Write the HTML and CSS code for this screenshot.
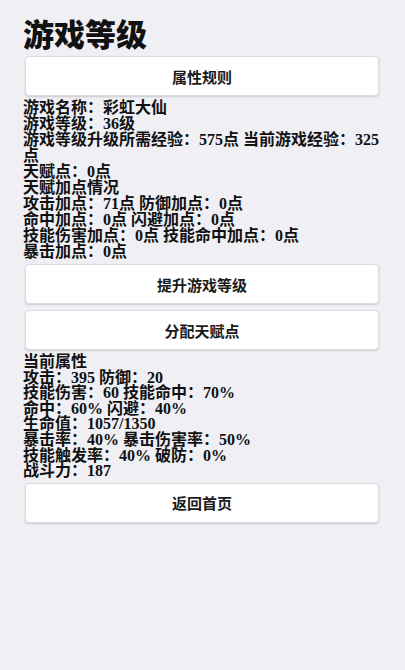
FILE: index.html
```html
<!DOCTYPE html>
<html lang="zh-CN">
<head>
<meta charset="utf-8">
<title>游戏等级</title>
<link rel="stylesheet" href="styles.css">
</head>
<body>
<div class="page">
  <h1 class="title">游戏等级</h1>
  <button class="btn">属性规则</button>
  <div class="info">
    <div>游戏名称：彩虹大仙</div>
    <div>游戏等级：36级</div>
    <div>游戏等级升级所需经验：575点 当前游戏经验：325点</div>
    <div>天赋点：0点</div>
    <div>天赋加点情况</div>
    <div>攻击加点：71点 防御加点：0点</div>
    <div>命中加点：0点 闪避加点：0点</div>
    <div>技能伤害加点：0点 技能命中加点：0点</div>
    <div>暴击加点：0点</div>
  </div>
  <button class="btn">提升游戏等级</button>
  <button class="btn">分配天赋点</button>
  <div class="info info-tight">
    <div>当前属性</div>
    <div>攻击：395 防御：20</div>
    <div>技能伤害：60 技能命中：70%</div>
    <div>命中：60% 闪避：40%</div>
    <div>生命值：1057/1350</div>
    <div>暴击率：40% 暴击伤害率：50%</div>
    <div>技能触发率：40% 破防：0%</div>
    <div>战斗力：187</div>
  </div>
  <button class="btn">返回首页</button>
</div>
</body>
</html>
```
FILE: styles.css
```css
html, body {
  margin: 0;
  padding: 0;
  background: #efeff4;
}
body {
  width: 405px;
  height: 670px;
  font-family: "Liberation Serif", "Noto Sans CJK SC", serif;
  font-weight: bold;
  font-size: 16px;
  color: #111;
}
.page {
  display: flex;
  flex-direction: column;
  padding: 17px 23px 0 23px;
}
.title {
  margin: 0 0 4px 0;
  font-size: 31px;
  line-height: 32px;
  font-weight: 900;
  font-family: "Noto Sans CJK SC", sans-serif;
  color: #111;
}
.btn {
  margin: 3px 3px 3px 2px;
  height: 40px;
  background: #fff;
  border: 1px solid #dcdce0;
  border-radius: 4px;
  box-shadow: 0 1px 2px rgba(0, 0, 0, 0.15);
  font-family: "Liberation Serif", "Noto Sans CJK SC", serif;
  font-weight: bold;
  font-size: 15px;
  color: #1a1a1a;
  padding: 0;
}
.info {
  line-height: 16px;
  margin: 1px 0;
}
.info-tight {
  line-height: 15.6px;
}
```
